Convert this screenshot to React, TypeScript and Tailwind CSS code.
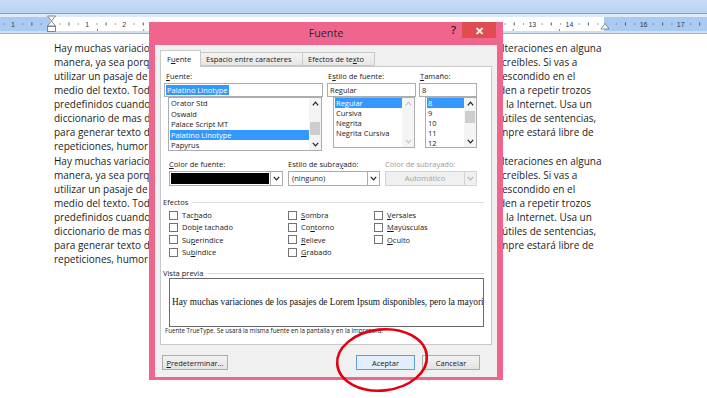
import React from "react";

type DocLine = { left: React.ReactNode; right: string; shift: string };

const squiggle = "underline decoration-wavy decoration-[#4caf50] decoration-1 underline-offset-2";

const block: DocLine[] = [
  { left: "Hay muchas variaciones de los pasajes de Lorem Ipsum disponibles, pero la mayoría sufrió a", right: "lteraciones en alguna", shift: "" },
  { left: "manera, ya sea porque se le agregó humor, o palabras aleatorias que no parecen ni un poco in", right: "creíbles. Si vas a", shift: "" },
  { left: "utilizar un pasaje de Lorem Ipsum, necesitás estar seguro de que no hay nada avergonzante", right: "escondido en el", shift: "" },
  { left: "medio del texto. Todos los generadores de Lorem Ipsum que se encuentran en Internet tien", right: "den a repetir trozos", shift: "ml-[-3px]" },
  { left: "predefinidos cuando sea necesario, haciendo a este el único generador verdadero (válido) en", right: "la Internet. Usa un", shift: "pl-[4px]" },
  {
    left: (
      <>
        diccionario de <span className={squiggle}>mas</span> de 200 palabras provenientes del latín, combinadas con estructuras muy
      </>
    ),
    right: "útiles de sentencias,",
    shift: "",
  },
  { left: "para generar texto de Lorem Ipsum que parezca razonable. Este Lorem Ipsum generado sie", right: "mpre estará libre de", shift: "ml-[-3px]" },
  { left: "repeticiones, humor agregado o palabras no características del lenguaje, etc.", right: "", shift: "" },
];

const docLines = [...block, ...block];

function Ruler() {
  const marks = [];
  for (let n = -2; n <= 18; n++) {
    const x = 50 + n * 37.1;
    if (n !== 0 && n !== 15 && n >= -1 && n <= 17) {
      marks.push(
        <text key={"n" + n} x={x} y={27} fontSize="7" textAnchor="middle" fill="#2d3a4a" fontFamily="Liberation Sans, sans-serif">
          {Math.abs(n)}
        </text>
      );
    }
    marks.push(<rect key={"a" + n} x={x + 9.3} y={23.5} width={1} height={1} fill="#45556a" />);
    marks.push(<rect key={"b" + n} x={x + 18.5} y={22.5} width={1} height={3} fill="#45556a" />);
    marks.push(<rect key={"c" + n} x={x + 27.8} y={23.5} width={1} height={1} fill="#45556a" />);
  }
  const tabs = [];
  for (let i = 0; i < 11; i++) {
    tabs.push(<rect key={"t" + i} x={97 + i * 46.2} y={29} width={1} height={2} fill="#8a8a8a" />);
  }
  return (
    <svg width="707" height="34" viewBox="0 0 707 34" className="block">
      <defs>
        <linearGradient id="topbar" x1="0" y1="0" x2="0" y2="1">
          <stop offset="0" stopColor="#c8def6" />
          <stop offset="1" stopColor="#b7d3f2" />
        </linearGradient>
      </defs>
      <rect x="0" y="0" width="707" height="13" fill="url(#topbar)" />
      <rect x="0" y="13" width="707" height="1" fill="#8b9fb8" />
      <rect x="0" y="14" width="707" height="3" fill="#dfeaf7" />
      <rect x="0" y="17" width="707" height="14" fill="#ffffff" />
      <rect x="0" y="17" width="50" height="14" fill="#a9cbf1" />
      <rect x="604" y="17" width="103" height="14" fill="#a9cbf1" />
      {marks}
      {tabs}
      <rect x="0" y="31" width="707" height="2" fill="#cfe0f4" />
      <rect x="0" y="33" width="707" height="1" fill="#a3b0c0" />
      <polygon points="47.5,16 55.5,16 51.5,21 55.5,26 47.5,26 51.5,21" fill="#ffffff" stroke="#6c6c6c" strokeWidth="0.8" />
      <rect x="47.5" y="26.5" width="8" height="5" fill="#ffffff" stroke="#6c6c6c" strokeWidth="0.8" />
      <polygon points="601,29 605,23.5 609,29" fill="#ffffff" stroke="#6c6c6c" strokeWidth="0.8" />
    </svg>
  );
}

function Chev({ up, color = "#1f1f1f" }: { up?: boolean; color?: string }) {
  return (
    <svg width="7" height="5" viewBox="0 0 7 5" className="block">
      <polyline
        points={up ? "0.8,4.3 3.5,1.2 6.2,4.3" : "0.8,0.8 3.5,3.8 6.2,0.8"}
        fill="none"
        stroke={color}
        strokeWidth="1.2"
      />
    </svg>
  );
}

function VScroll({ thumb, disabled }: { thumb?: string; disabled?: boolean }) {
  const c = disabled ? "#c4c4c4" : "#1f1f1f";
  return (
    <div className="flex w-[12px] flex-col bg-[#f4f4f4]">
      <div className="flex h-[11px] items-center justify-center">
        <Chev up color={c} />
      </div>
      <div className="flex-1">{thumb && <div className={`mx-[1px] bg-[#cdcdcd] ${thumb}`} />}</div>
      <div className="flex h-[11px] items-center justify-center">
        <Chev color={c} />
      </div>
    </div>
  );
}

function ListBox({
  items,
  selected,
  row,
  width,
  height,
  thumb,
  disabled,
}: {
  items: string[];
  selected: number;
  row: string;
  width: string;
  height: string;
  thumb?: string;
  disabled?: boolean;
}) {
  return (
    <div className={`flex border border-[#abadb3] bg-white ${width} ${height}`}>
      <div className="flex-1 overflow-hidden pl-[1px]">
        {items.map((it, i) => (
          <div
            key={it}
            className={`${row} whitespace-nowrap pl-[1px] ${i === selected ? "bg-[#3399ff] text-white" : ""}`}
          >
            {it}
          </div>
        ))}
      </div>
      <VScroll thumb={thumb} disabled={disabled} />
    </div>
  );
}

function Combo({ children, width, disabled }: { children: React.ReactNode; width: string; disabled?: boolean }) {
  return (
    <div className={`flex h-[15px] border ${disabled ? "border-[#d4d4d4] bg-[#f0f0f0]" : "border-[#acacac] bg-white"} ${width}`}>
      <div className="flex-1 overflow-hidden">{children}</div>
      <div className={`flex w-[12px] items-center justify-center border-l ${disabled ? "border-[#d4d4d4]" : "border-[#acacac]"}`}>
        <Chev color={disabled ? "#b5b5b5" : "#1f1f1f"} />
      </div>
    </div>
  );
}

function Check({ label }: { label: React.ReactNode }) {
  return (
    <div className="flex h-[12.3px] items-center">
      <span className="h-[9px] w-[9px] border border-[#737373] bg-white" />
      <span className="ml-[4px] leading-[10px]">{label}</span>
    </div>
  );
}

function Btn({ children, width, primary }: { children: React.ReactNode; width: string; primary?: boolean }) {
  return (
    <div
      className={`flex h-[15px] items-center justify-center border leading-[10px] ${width} ${
        primary ? "border-[#5b9edc] bg-[#e1eefb]" : "border-[#acacac] bg-gradient-to-b from-[#f2f2f2] to-[#e3e3e3]"
      }`}
    >
      {children}
    </div>
  );
}

function Dialog() {
  return (
    <div className="absolute left-[149px] top-[22px] flex h-[358px] w-[354px] flex-col bg-[#f0658e] px-[6px] pb-[3px] font-['Open_Sans','Liberation_Sans',sans-serif] text-[#1a1a1a]">
      {/* title bar */}
      <div className="grid h-[23px] grid-cols-[1fr_auto_1fr]">
        <div />
        <div className="pt-[3px] text-[10.7px] leading-[16px] text-[#2a2a2a]">Fuente</div>
        <div className="flex items-start justify-end">
          <span className="mr-[6px] mt-[1px] text-[11px] font-semibold leading-[14px] text-[#222]">?</span>
          <div className="mr-[1px] flex h-[16px] w-[34px] items-center justify-center bg-[#e04c50] text-[11px] font-bold leading-none text-white">
            ✕
          </div>
        </div>
      </div>

      {/* client area */}
      <div className="flex flex-1 flex-col bg-[#f0f0f0] text-[7.5px]">
        {/* tabs */}
        <div className="flex h-[21px] items-end pl-[5px]">
          <div className="relative z-10 mb-[-1px] flex h-[17px] w-[41px] items-start border border-b-0 border-[#c9c9c9] bg-white pl-[6px] pt-[3px] leading-[10px]">
            F<u>u</u>ente
          </div>
          <div className="flex h-[14px] w-[102px] items-center border border-l-0 border-[#c9c9c9] bg-gradient-to-b from-[#f3f3f3] to-[#e6e6e6] pl-[5px] leading-[10px]">
            Espacio entre caracteres
          </div>
          <div className="flex h-[14px] w-[72px] items-center border border-l-0 border-[#c9c9c9] bg-gradient-to-b from-[#f3f3f3] to-[#e6e6e6] pl-[5px] leading-[10px]">
            Efectos de te<u>x</u>to
          </div>
        </div>

        {/* tab page */}
        <div className="mx-[5px] flex h-[279px] flex-col border border-[#c9c9c9] bg-white">
          {/* font / style / size */}
          <div className="flex pl-[3px]">
            <div className="w-[159px]">
              <div className="h-[16px] pl-[2px] pt-[3px] leading-[12px]">
                <u>F</u>uente:
              </div>
              <div className="h-[14px] border border-[#abadb3] bg-white pl-[1px] pt-[1px]">
                <span className="bg-[#3399ff] px-[1px] leading-[10px] text-white">Palatino Linotype</span>
              </div>
              <div className="ml-[4px]">
                <ListBox
                  items={["Orator Std", "Oswald", "Palace Script MT", "Palatino Linotype", "Papyrus"]}
                  selected={3}
                  row="h-[10.5px] leading-[10.5px]"
                  width="w-[154px]"
                  height="h-[54px]"
                  thumb="mt-[13px] h-[13px]"
                />
              </div>
            </div>
            <div className="ml-[4px] w-[89px]">
              <div className="h-[16px] pl-[1px] pt-[3px] leading-[12px]">
                E<u>s</u>tilo de fuente:
              </div>
              <div className="h-[14px] border border-[#abadb3] bg-white pl-[2px] leading-[12px]">Regular</div>
              <div className="ml-[6px]">
                <ListBox
                  items={["Regular", "Cursiva", "Negrita", "Negrita Cursiva"]}
                  selected={0}
                  row="h-[10px] leading-[10px]"
                  width="w-[82px]"
                  height="h-[51px]"
                  disabled
                />
              </div>
            </div>
            <div className="ml-[3px] w-[58px]">
              <div className="h-[16px] pl-[1px] pt-[3px] leading-[12px]">
                <u>T</u>amaño:
              </div>
              <div className="h-[14px] border border-[#abadb3] bg-white pl-[2px] leading-[12px]">8</div>
              <div className="ml-[6px]">
                <ListBox
                  items={["8", "9", "10", "11", "12"]}
                  selected={0}
                  row="h-[10px] leading-[10px]"
                  width="w-[52px]"
                  height="h-[51px]"
                  thumb="mt-[2px] h-[12px]"
                />
              </div>
            </div>
          </div>

          {/* colour / underline */}
          <div className="mt-[7px] flex pl-[8px]">
            <div className="w-[119px]">
              <div className="h-[13px] leading-[12px]">
                <u>C</u>olor de fuente:
              </div>
              <Combo width="w-[114px]">
                <div className="m-[1px] h-[11px] bg-black" />
              </Combo>
            </div>
            <div className="w-[97px]">
              <div className="h-[13px] leading-[12px]">
                Estilo de subra<u>y</u>ado:
              </div>
              <Combo width="w-[92px]">
                <div className="pl-[3px] leading-[13px]">(ninguno)</div>
              </Combo>
            </div>
            <div className="w-[92px]">
              <div className="h-[13px] leading-[12px] text-[#9a9a9a]">Color de subrayado:</div>
              <Combo width="w-[92px]" disabled>
                <div className="text-center leading-[13px] text-[#a3a3a3]">Automático</div>
              </Combo>
            </div>
          </div>

          {/* effects */}
          <div className="mt-[10px] flex h-[12px] items-center pl-[2px] pr-[7px]">
            <span className="leading-[12px]">Efectos</span>
            <div className="ml-[4px] flex-1 border-t border-[#dcdcdc]" />
          </div>
          <div className="mt-[1px] grid grid-cols-[119px_86px_1fr] pl-[8px]">
            <div>
              <Check label={<>Tac<u>h</u>ado</>} />
              <Check label={<>Dob<u>l</u>e tachado</>} />
              <Check label={<>Su<u>p</u>eríndice</>} />
              <Check label={<>Su<u>b</u>índice</>} />
            </div>
            <div>
              <Check label={<><u>S</u>ombra</>} />
              <Check label={<>Co<u>n</u>torno</>} />
              <Check label={<><u>R</u>elieve</>} />
              <Check label={<><u>G</u>rabado</>} />
            </div>
            <div>
              <Check label={<><u>V</u>ersales</>} />
              <Check label={<><u>M</u>ayúsculas</>} />
              <Check label={<><u>O</u>culto</>} />
            </div>
          </div>

          {/* preview */}
          <div className="mt-[11px] flex h-[9px] items-center pl-[2px] pr-[7px]">
            <span className="leading-[9px]">Vista previa</span>
            <div className="ml-[4px] flex-1 border-t border-[#dcdcdc]" />
          </div>
          <div className="ml-[8px] flex h-[49px] w-[315px] items-center overflow-hidden border border-[#6a6a6a] bg-white pl-[2px]">
            <span className="whitespace-nowrap font-['Liberation_Serif',serif] text-[9.3px] text-[#111]">
              Hay muchas variaciones de los pasajes de Lorem Ipsum disponibles, pero la mayoría sufrió alteraciones
            </span>
          </div>
          <div className="pl-[4px] text-[6.2px] leading-[8px]">
            Fuente TrueType. Se usará la misma fuente en la pantalla y en la impresora.
          </div>
        </div>

        {/* buttons */}
        <div className="mt-[10px] flex items-center pl-[7px] pr-[17px]">
          <Btn width="w-[66px]">
            <span>
              <u>P</u>redeterminar...
            </span>
          </Btn>
          <div className="flex-1" />
          <Btn width="w-[59px]" primary>
            Aceptar
          </Btn>
          <div className="w-[7px]" />
          <Btn width="w-[58px]">Cancelar</Btn>
        </div>
      </div>
    </div>
  );
}

export default function App() {
  return (
    <div className="relative h-[398px] w-[707px] overflow-hidden bg-white">
      <Ruler />
      <div className="pt-[7px] font-['Open_Sans','Liberation_Sans',sans-serif] text-[10px] leading-[14.07px] text-[#1c1c1c]">
        {docLines.map((l, i) => (
          <div key={i} className="flex h-[14.07px]">
            <div className="ml-[54px] w-[448px] overflow-hidden whitespace-nowrap">{l.left}</div>
            <div className={`whitespace-nowrap ${l.shift}`}>{l.right}</div>
          </div>
        ))}
      </div>

      <Dialog />

      {/* hand-drawn red circle around the OK button */}
      <svg className="absolute left-[328px] top-[322px]" width="110" height="76" viewBox="0 0 110 76">
        <ellipse cx="54" cy="38" rx="45" ry="30.5" fill="none" stroke="#e2000f" strokeWidth="2.6" transform="rotate(-6 54 38)" />
      </svg>
    </div>
  );
}
